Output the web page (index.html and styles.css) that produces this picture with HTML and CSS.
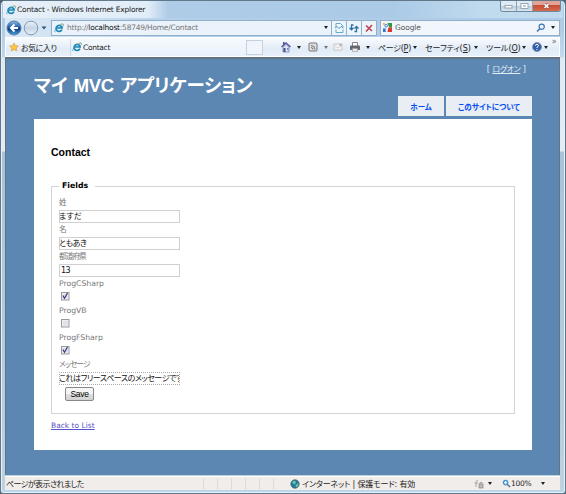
FILE: index.html
```html
<!DOCTYPE html>
<html lang="ja">
<head>
<meta charset="utf-8">
<title>Contact - Windows Internet Explorer</title>
<link rel="stylesheet" href="styles.css">
</head>
<body>
<svg class="defs" width="0" height="0">
  <symbol id="ie" viewBox="0 0 12 12">
    <path d="M9.5 8A3.7 3.7 0 1 1 9.8 6H3" fill="none" stroke="#1687b5" stroke-width="2"/>
    <path d="M1.5 11C-.5 10 3 5 6 3S11 .5 11.3 1.5 10.8 4 10.2 4.6" fill="none" stroke="#459cc0" stroke-width="1"/>
    <path d="M7 2Q11 .2 11 2.3" fill="none" stroke="#e5b85b" stroke-width=".8"/>
  </symbol>
</svg>
<div class="window">
  <header class="titlebar">
    <svg class="ie"><use href="#ie"/></svg>
    <span class="caption">Contact - Windows Internet Explorer</span>
    <div class="controls">
      <span class="ctl"><svg viewBox="0 0 14 10"><rect x="3.5" y="4.5" width="7" height="2.5" fill="#fff" stroke="#8796a5" stroke-width=".8"/></svg></span>
      <span class="ctl"><svg viewBox="0 0 14 10"><rect x="3.5" y="2.5" width="7" height="5" fill="#fff" stroke="#8796a5" stroke-width=".8"/><path d="M5.5 5h3" stroke="#8796a5"/></svg></span>
      <span class="ctl close"><svg viewBox="0 0 28 10"><path d="M12 3l4 4m0-4l-4 4" stroke="#7c3d38" stroke-width="3"/><path d="M12 3l4 4m0-4l-4 4" stroke="#fff" stroke-width="1.7"/></svg></span>
    </div>
  </header>
  <nav class="navrow">
    <svg class="backfwd" viewBox="0 0 44 18">
      <defs><linearGradient id="bk" x2="0" y2="1"><stop stop-color="#8db9e1"/><stop offset=".45" stop-color="#2460a8"/><stop offset=".55" stop-color="#0b3a80"/><stop offset="1" stop-color="#45a9df"/></linearGradient>
      <linearGradient id="fw" x2="0" y2="1"><stop stop-color="#eef4fa"/><stop offset=".5" stop-color="#c5d4e3"/><stop offset="1" stop-color="#e7f1f9"/></linearGradient></defs>
      <circle cx="8" cy="9" r="7" fill="url(#bk)" stroke="#587ca3"/>
      <path d="M12 9H5m3.5-3.5L5 9l3.500 3.500" fill="none" stroke="#fff" stroke-width="2"/>
      <circle cx="25" cy="9" r="6.800" fill="url(#fw)" stroke="#8298af"/>
      <path d="M35.500 7.500h5L38 10.500z" fill="#33536f"/>
    </svg>
    <div class="address">
      <svg class="ie"><use href="#ie"/></svg>
      <span class="url">http://<b>localhost</b>:58749/Home/Contact</span>
      <i class="arrow"></i>
    </div>
    <span class="navbtn"><svg viewBox="0 0 14 14"><path d="M4 6V2.500h4.500L11 5v1M4 8.500v3h7v-3" fill="#eef8fd" stroke="#67a9cf"/><path d="M3 7l2-1.500 2 2 2-2L11.500 7" fill="none" stroke="#4d94c5"/></svg></span>
    <span class="navbtn"><svg viewBox="0 0 14 14"><path d="M6.500 4H4.500v4.500M2.500 6.800l2 2 2-2M7.500 10.500H9.500V6M7.500 7.500l2-2 2 2" fill="none" stroke="#2d6fa9" stroke-width="1.300"/></svg></span>
    <span class="navbtn"><svg viewBox="0 0 14 14"><path d="M4 4.500l6 5.500M10 4l-6 6.500" stroke="#bd4353" stroke-width="1.600"/></svg></span>
    <div class="search">
      <svg class="gicon" viewBox="0 0 10 10"><path d="M0 0h6v10H0z" fill="#eef4fd"/><path d="M5 0h5v5H7z" fill="#2e9842"/><path d="M6 5h4v5H5z" fill="#d83b30"/><path d="M0 6h3v4H0z" fill="#3976d2"/><circle cx="3.500" cy="3" r="1.500" fill="none" stroke="#3976d2"/><path d="M0 0h2v2H0z" fill="#e9b92f"/></svg>
      <span class="google">Google</span>
      <svg class="lens" viewBox="0 0 10 10"><circle cx="5.700" cy="3.700" r="2.600" fill="#e8f4ff" stroke="#4275b2" stroke-width="1.200"/><path d="M4 5.500L1 8.500" stroke="#4275b2" stroke-width="1.600"/></svg>
      <i class="arrow"></i>
    </div>
  </nav>
  <div class="commands">
    <div class="favorites">
      <svg viewBox="0 0 12 11"><path d="M6 .8l1.500 3.100 3.700.4-2.700 2.400.7 3.500L6 8.500l-3.200 1.700.7-3.500L.8 4.300l3.700-.4z" fill="#ffc845" stroke="#da9630" stroke-width=".8"/></svg>
      <span>お気に入り</span>
    </div>
    <div class="tab"><svg class="ie"><use href="#ie"/></svg><span>Contact</span></div>
    <div class="newtab"></div>
    <div class="tools">
      <svg class="ico home" viewBox="0 0 12 12"><path d="M1.500 6L6 2l4.500 4" fill="none" stroke="#615ea5" stroke-width="1.600"/><path d="M3 6l3-2.500L9 6v5H3z" fill="#d9e4f3" stroke="#7584ac" stroke-width=".8"/><path d="M3.500 7h2v4h-2zM3 1h1.500v3H3z" fill="#504b88"/><path d="M7 7h1.500v2H7z" fill="#609aba"/></svg>
      <i class="arrow a1"></i>
      <svg class="ico rss" viewBox="0 0 12 12"><rect x="2" y="2" width="8" height="8" rx="1" fill="#dedede" stroke="#777"/><path d="M4 4.500a4 4 0 0 1 4 4M4 6.500a2 2 0 0 1 2 2" fill="none" stroke="#777"/></svg>
      <i class="arrow a2"></i>
      <svg class="ico mail" viewBox="0 0 12 12"><rect x="2" y="3" width="8" height="6" fill="#f6f6f5" stroke="#c7c6c3"/><path d="M7.500 3h2v2h-2z" fill="#c3a5a0"/><path d="M3 5l3 2 3-2" fill="none" stroke="#d3d1ce"/></svg>
      <svg class="ico print" viewBox="0 0 12 12"><path d="M3.500 5V1.500h5V5" fill="#fff" stroke="#888"/><rect x="1" y="4.500" width="10" height="4.500" rx="1" fill="#64686c"/><path d="M3.500 7.500h5v3h-5z" fill="#e9e9e9" stroke="#999" stroke-width=".6"/></svg>
      <i class="arrow a3"></i>
      <span class="menu m1">ページ(<u>P</u>)</span><i class="arrow"></i>
      <span class="menu m2">セーフティ(<u>S</u>)</span><i class="arrow"></i>
      <span class="menu m3">ツール(<u>O</u>)</span><i class="arrow"></i>
      <svg class="ico help" viewBox="0 0 12 12"><circle cx="6" cy="6" r="4.500" fill="#305da7" stroke="#8797ba"/><path d="M4.500 4.700Q4.500 3.300 6 3.300T7.500 4.600Q7.500 5.500 6 6.200V7M6 8v1" fill="none" stroke="#fff"/></svg>
      <i class="arrow a4"></i>
      <span class="more">»</span>
    </div>
  </div>
  <main class="page">
    <div class="logon">[ <a>ログオン</a> ]</div>
    <h1><span class="k1">マイ</span><span class="mvc">MVC</span><span class="k2">アプリケーション</span></h1>
    <div class="menus"><a class="mhome"><span>ホーム</span></a><a class="mabout"><span>このサイトについて</span></a></div>
    <section class="content">
      <h2>Contact</h2>
      <div class="fieldset">
        <div class="legend">Fields</div>
        <div class="row"><label>姓</label><div class="input"><span>ますだ</span></div></div>
        <div class="row"><label>名</label><div class="input"><span class="t2">ともあき</span></div></div>
        <div class="row"><label class="pref">都道府県</label><div class="input"><span class="num">13</span></div></div>
        <div class="row"><label>ProgCSharp</label><svg class="check" viewBox="0 0 10 10"><use href="#box"/><path class="tick" d="M2.800 4.500l1.700 2.800L7.500 2"/></svg></div>
        <div class="row"><label>ProgVB</label><svg class="check" viewBox="0 0 10 10"><g id="box"><rect x="1.500" y="1.500" width="7.500" height="7.500" fill="#f4f4f4" stroke="#999"/><rect x="2.800" y="2.800" width="4.900" height="4.900" fill="#dfe2e8"/></g></svg></div>
        <div class="row"><label>ProgFSharp</label><svg class="check" viewBox="0 0 10 10"><use href="#box"/><path class="tick" d="M2.800 4.500l1.700 2.800L7.500 2"/></svg></div>
        <div class="row last"><label class="msg">メッセージ</label><div class="input focus"><span class="t3">これはフリースペースのメッセージです</span></div></div>
        <div class="save">Save</div>
      </div>
      <a class="back">Back to List</a>
    </section>
  </main>
  <footer class="status">
    <span class="done">ページが表示されました</span>
    <div class="cells"><i></i><i></i><i></i><i></i><i></i><i></i></div>
    <svg class="globe" viewBox="0 0 10 10"><circle cx="5" cy="5" r="4.200" fill="#237d9a" stroke="#3b6275" stroke-width=".7"/><path d="M2 3l3-1.500L6 4 4 5.500zM5.500 6.500L8.500 4 8 7 6 8.500z" fill="#72c6a0"/></svg>
    <span class="zone">インターネット | 保護モード: 有効</span>
    <svg class="lock" viewBox="0 0 10 10"><path d="M2 8V3Q2 1.500 4 1.500M.5 4H4" fill="none" stroke="#aaa"/><rect x="5" y="5" width="4" height="4" fill="#bbb" stroke="#888" stroke-width=".7"/><path d="M6 5V3.500h2V5" fill="none" stroke="#999" stroke-width=".8"/></svg>
    <i class="arrow"></i>
    <svg class="zoom" viewBox="0 0 10 10"><circle cx="4" cy="4" r="2.700" fill="#6badea" stroke="#3980c6"/><path d="M6 6l3 3" stroke="#4c6d91" stroke-width="1.500"/><path d="M4 2.500v3M2.500 4h3" stroke="#fff"/></svg>
    <span class="pct">100%</span>
    <i class="arrow pctarrow"></i>
  </footer>
</div>
</body>
</html>
```
FILE: styles.css
```css
* { box-sizing: border-box; }
body { margin: 0; width: 566px; height: 494px; overflow: hidden; background: #4f6373; font-family: "DejaVu Sans", "Noto Sans CJK JP", sans-serif; font-size: 8px; color: #222; }
.defs { display: block; height: 0; }
svg, i, span, label { flex: none; }
span, label, a { white-space: nowrap; font-feature-settings: "palt"; }
.window { width: 566px; height: 494px; display: flex; flex-direction: column; padding: 0 5px 4px 4px; border: 1px solid #61788b; border-radius: 5px 5px 3px 3px; background: linear-gradient(#abc9e5 0, #b0cde8 28px, #c3d8ea 56px, #dfe9f2 57px, #e4ecf2 150px, #a9c3d6 151px, #bdd1df 485px, #b9daf0 493px); box-shadow: inset 0 0 0 1px #e5f1fa; }
.ie { width: 10px; height: 10px; }
.arrow { width: 0; height: 0; border: 2.500px solid transparent; border-top: 3px solid #222; border-bottom: 0; }
.titlebar { height: 17px; flex: none; display: flex; align-items: center; background: linear-gradient(90deg, #e6eff8 0, #e1edf8 145px, #afcce7 165px, #aacae6 390px, #c0daee 480px); margin: 0 -3px 0 -2px; padding-left: 3px; }
.caption { font-size: 7.500px; margin-left: 1px; letter-spacing: -.22px; }
.controls { display: flex; height: 11px; margin: 0 2px 0 auto; align-self: flex-start; border: 1px solid #71899f; border-top: 0; border-radius: 0 0 3px 3px; overflow: hidden; }
.ctl { width: 16px; height: 10px; border-right: 1px solid #8da3b5; background: linear-gradient(#dfebf4 45%, #b7cad9 46%, #d7e7f1); }
.ctl svg { display: block; width: 100%; height: 10px; }
.ctl.close { width: 27px; border: 0; background: linear-gradient(#e4a397 40%, #c54e39 45%, #d66b4d); }
.navrow { height: 19px; flex: none; display: flex; align-items: center; background: linear-gradient(90deg, #dbe8f5 0, #c9def1 90px, #b2cee9 180px, #aecbe7); }
.backfwd { width: 44px; height: 18px; margin-left: 1px; }
.address { width: 281px; height: 16px; margin-left: 1px; display: flex; align-items: center; background: #eaf2fb; border: 1px solid #94b0c8; padding-left: 2px; }
.url { color: #777; font-size: 7.500px; margin-left: 3px; letter-spacing: -.24px; }
.url b { font-weight: normal; color: #111; }
.address .arrow { margin: 0 3px 0 auto; }
.navbtn { width: 15px; height: 16px; border: 1px solid #94b0c8; border-left: 0; background: #edf5fc; }
.navbtn svg { width: 14px; height: 14px; display: block; }
.search { height: 16px; flex: 1; margin: 0 0 0 3px; display: flex; align-items: center; background: #f0f6fc; border: 1px solid #94b0c8; padding: 0 4px 0 2px; }
.gicon { width: 9px; height: 9px; }
.google { color: #555; font-size: 7.500px; margin-left: 3px; letter-spacing: -.1px; }
.lens { width: 10px; height: 10px; margin: 0 5px 0 auto; }
.commands { height: 20px; flex: none; display: flex; align-items: center; background: linear-gradient(#f9fbfe, #e1ebf7 60%, #e7f0fa); border: 1px solid #fbfdff; }
.favorites { width: 65px; height: 17px; display: flex; align-items: center; padding-left: 3px; border-right: 1px solid #cfdbe8; }
.favorites svg { width: 10px; height: 10px; margin-right: 2px; }
.favorites span { letter-spacing: -.5px; }
.tab { width: 174px; flex: none; height: 17px; margin-left: 1px; display: flex; align-items: center; background: linear-gradient(#f5f9fd, #e9f1fa); }
.tab span { font-size: 7.500px; margin-left: 1px; letter-spacing: -.3px; }
.newtab { width: 17px; flex: none; height: 15px; border: 1px solid #c6d1de; background: #f0f5fb; }
.tools { display: flex; flex: 1; min-width: 0; align-items: center; padding-left: 17px; }
.ico { width: 12px; height: 12px; }
.a1 { margin: 0 6px 0 5px; }
.a2 { margin: 0 4px 0 5px; border-top-color: #777; }
.print { margin-left: 5px; }
.a3 { margin: 0 8px 0 5px; }
.menu { font-size: 8px; margin-right: 3px; }
.m1 { margin-right: 2px; letter-spacing: -.3px; }
.m2, .m3 { margin-left: 8px; }
.m3 { margin-right: 1px; letter-spacing: -.1px; }
.help { margin-left: 5px; }
.a4 { margin-left: 1px; }
.more { align-self: flex-start; margin: -4px 0 0 4px; font-size: 8px; color: #667; }
.page { height: 418px; flex: none; border: 1px solid #65727f; border-top-width: 2px; border-bottom: 0; background: #5c87b2; padding: 5px 27px 0 28px; margin-bottom: 1px; }
.logon { height: 12px; line-height: 12px; text-align: right; color: #e2ecf5; padding-right: 6px; font-size: 8px; white-space: nowrap; }
.logon a { text-decoration: underline; letter-spacing: -.4px; }
h1 { margin: 0; height: 20px; display: flex; align-items: center; color: #fff; font: bold 18.500px/20px "Liberation Sans", "Noto Sans CJK JP", sans-serif; }
.k2 { letter-spacing: -.25px; }
.mvc { margin: 0 6px 0 6px; letter-spacing: -.3px; }
.menus { height: 23px; display: flex; justify-content: flex-end; gap: 2px; }
.menus a { height: 20px; background: #e8eef4; color: #034af3; font-weight: bold; display: flex; align-items: center; justify-content: center; font-size: 7.500px; }
.mhome { width: 46px; }
.mabout { width: 86px; }
.content { height: 331px; background: #fff; padding: 26px 17px 0 17px; }
h2 { margin: 0; height: 14px; color: #000; font: bold 10.500px/14px "Liberation Sans", sans-serif; }
.fieldset { margin-top: 27px; height: 228px; border: 1px solid #d4d4d4; padding-left: 7px; }
.legend { width: 36px; height: 14px; margin-top: -8px; background: #fff; padding-left: 3px; margin-left: 0; font-weight: bold; font-size: 7.800px; line-height: 14px; color: #000; margin-bottom: 3px; }
.row { height: 27px; display: flex; flex-direction: column; align-items: flex-start; color: #777; }
label { height: 14px; line-height: 13px; font-size: 7.700px; }
.pref { letter-spacing: -1px; }
.msg { letter-spacing: -.9px; }
.input { width: 121px; height: 13px; border: 1px solid #d0d0d0; overflow: hidden; color: #111; font-size: 8.500px; line-height: 11px; white-space: nowrap; }
.input span { display: block; font-size: 8px; margin-left: -1px; }
.t2 { letter-spacing: -.5px; }
.input .t3 { letter-spacing: -.45px; }
.input .num { padding-left: 2px; letter-spacing: -.5px; }
.focus { border: 1px dotted #aaa; }
.check { width: 10px; height: 10px; margin: 0 0 0 1px; }
.tick { fill: none; stroke: #3d4388; stroke-width: 1.300; }
.save { width: 29px; height: 14px; margin: 2px 0 0 6px; border: 1px solid #888; border-radius: 2px; background: linear-gradient(#f5f5f5 48%, #dedede 52%, #d2d2d2); font: 8.500px/12px "Liberation Sans", sans-serif; letter-spacing: -.3px; text-align: center; color: #000; }
.back { display: inline-block; margin-top: 7px; color: #5555c8; text-decoration: underline; font-size: 7.500px; line-height: 10px; }
.status { height: 14px; flex: none; display: flex; align-items: center; background: #f1edeb; border-top: 1px solid #fff; }
.done { width: 198px; padding-left: 1px; letter-spacing: -.6px; }
.cells { display: flex; }
.cells i { width: 14px; height: 12px; border-left: 1px solid #e0dbd9; }
.globe { width: 10px; height: 10px; margin: 0 2px 0 3px; }
.zone { width: 172px; letter-spacing: -.15px; }
.lock { width: 10px; height: 10px; margin-right: 4px; }
.zoom { width: 9px; height: 9px; margin: 0 0 0 10px; }
.pct { font-size: 7.500px; letter-spacing: -.3px; margin-left: 0; }
.pctarrow { margin-left: 10px; }
```
